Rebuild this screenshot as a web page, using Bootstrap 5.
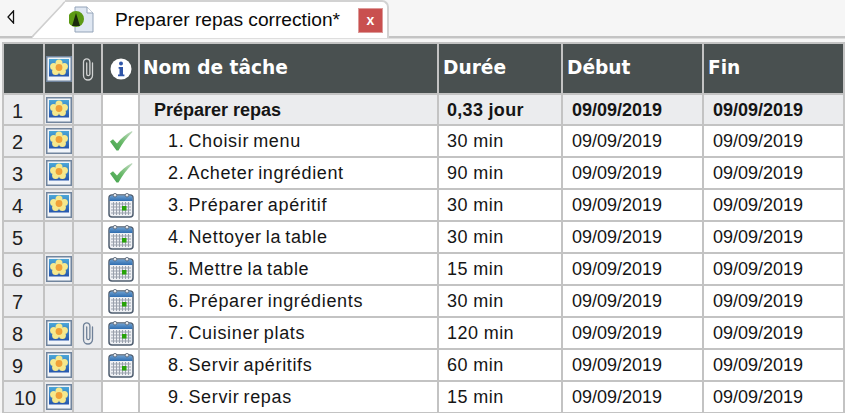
<!DOCTYPE html>
<html lang="fr">
<head>
    <meta charset="UTF-8">
    <title>Preparer repas correction</title>
    <link href="https://cdn.jsdelivr.net/npm/bootstrap@5.3.0/dist/css/bootstrap.min.css" rel="stylesheet">
    <style>
        body { background: #fff; font-family: "Liberation Sans", Arial, sans-serif; overflow: hidden; }
        .tab-strip { height: 38px; background: #f6f6f6; border-bottom: 2px solid #c4c4c4; }
        .tab-arrow { width: 32px; padding-left: 7px; padding-top: 10px; }
        .tab-slant { width: 33px; height: 38px; display: block; }
        .tab-body { width: 324px; height: 38px; background: #fff; border: 2px solid #d2d2d2; border-left: 0; border-bottom: 0; border-top-right-radius: 7px; padding-left: 4px; }
        .tab-title { font-size: 19.2px; color: #0a0a0a; margin-left: 20px; width: 243px; white-space: nowrap; }
        .tab-close { width: 25px; height: 25px; background: #c9504f; color: #fff; font-size: 14px; font-weight: 700; line-height: 22px; text-align: center; border: 1px solid #dd9a99; }
        .grid-wrap { padding: 3px 0 0 2px; background: #f6f6f6; height: 375px; border-top: 1px solid #dedede; }
        .task-grid { table-layout: fixed; width: 841px; border-collapse: collapse; margin: 0; }
        .task-grid th, .task-grid td { border: 2px solid #c3c3c3; padding: 0; vertical-align: middle; white-space: nowrap; overflow: hidden; line-height: 1.2; }
        .task-grid th { background: #495050; color: #fff; height: 51px; font-family: "DejaVu Sans", sans-serif; font-size: 18.6px; font-weight: 700; padding-left: 3px; }
        .task-grid td { height: 32px; padding-top: 2px; background: #fff; font-size: 18px; color: #151515; }
        .task-grid .grey-cell { background: #ebecee; }
        .task-grid .num-cell { font-size: 20px; font-weight: 400 !important; padding-left: 8px; color: #222; }
        .task-grid .num-cell.two { padding-left: 10px; }
        .task-grid .icon-cell { text-align: center; padding: 0; line-height: 0; }
        .task-grid .name-cell { padding-left: 28px; letter-spacing: .65px; word-spacing: -1.5px; }
        .task-grid .val-cell { padding-left: 8px; letter-spacing: .43px; }
        .task-grid .date-cell { padding-left: 9px; }
        .task-grid .sum-row td { font-weight: 700; height: 31px; }
        .task-grid .sum-row .name-cell { padding-left: 14px; letter-spacing: 0; word-spacing: 0; }
        .task-grid .sum-row .val-cell { letter-spacing: .3px; }
        .ic { display: inline-block; vertical-align: middle; }
    </style>
</head>
<body>
    <svg width="0" height="0" class="d-block position-absolute">
        <defs>
            <linearGradient id="skyG" x1="0" y1="0" x2="0" y2="1"><stop offset="0" stop-color="#4aa6d8"/><stop offset="1" stop-color="#2656ad"/></linearGradient>
            <linearGradient id="calTop" x1="0" y1="0" x2="0" y2="1"><stop offset="0" stop-color="#6c9fd0"/><stop offset="1" stop-color="#2f6db0"/></linearGradient>
            <linearGradient id="chkG" x1="1" y1="0" x2="0" y2="1"><stop offset="0" stop-color="#c6dcc6"/><stop offset=".55" stop-color="#66b866"/><stop offset="1" stop-color="#3f9f4a"/></linearGradient>
            <symbol id="i-photo" viewBox="0 0 26 26">
                <rect x=".75" y=".75" width="24.5" height="24.5" fill="#f1f5fa" stroke="#71859e" stroke-width="1.5"/>
                <rect x="3" y="3" width="20" height="17.5" fill="url(#skyG)"/>
                <g fill="#f6e88c">
                    <circle cx="13" cy="7" r="3.5"/><circle cx="7.6" cy="10.4" r="3.5"/><circle cx="18.4" cy="10.4" r="3.5"/><circle cx="9.6" cy="15.4" r="3.5"/><circle cx="16.4" cy="15.4" r="3.5"/>
                </g>
                <circle cx="13" cy="11.5" r="3.4" fill="#f0a038"/>
            </symbol>
            <symbol id="i-clip" viewBox="0 0 16 24">
                <path d="M12.5 6v12.5a4.5 4.5 0 0 1-9 0V5a3.2 3.2 0 0 1 6.4 0v12a1.6 1.6 0 0 1-3.2 0V6" fill="none" stroke="currentColor" stroke-width="1.3" stroke-linecap="round"/>
            </symbol>
            <symbol id="i-check" viewBox="0 0 24 22">
                <path d="M1 11.5 4 9.2 8 13.4C12 8.5 17 4 23 1 L23.5 2C17.5 8 13 14 9.5 20.5H7.5Z" fill="url(#chkG)"/>
            </symbol>
            <symbol id="i-cal" viewBox="0 0 26 26">
                <rect x="1" y="3" width="24" height="22" rx="3" fill="#eef0f4" stroke="#4f5d6f" stroke-width="1.5"/>
                <path d="M1.5 6a2.5 2.5 0 0 1 2.5-2.5h18a2.5 2.5 0 0 1 2.5 2.5v3h-23Z" fill="url(#calTop)"/>
                <path d="M3 12h20M3 15h20M3 18h20M3 21h20M5.5 10v13M8.5 10v13M11.5 10v13M14.5 10v13M17.5 10v13M20.5 10v13" fill="none" stroke="#9aa1ad" stroke-width="1"/>
                <rect x="14" y="14" width="4.5" height="4.5" fill="#27a308"/>
                <circle cx="7" cy="3.2" r="1.8" fill="#e6e9ee" stroke="#4f5d6f" stroke-width=".8"/>
                <circle cx="19" cy="3.2" r="1.8" fill="#e6e9ee" stroke="#4f5d6f" stroke-width=".8"/>
            </symbol>
            <symbol id="i-info" viewBox="0 0 22 22">
                <circle cx="11" cy="11" r="10.5" fill="#fff"/>
                <circle cx="11" cy="5.6" r="2" fill="#2f55a8"/>
                <path d="M8.6 9h4.4v7.4h1.4v1.8H8v-1.8h1.5v-5.6H8.6Z" fill="#2f55a8"/>
            </symbol>
        </defs>
    </svg>

    <div class="tab-strip d-flex align-items-start">
        <div class="tab-arrow">
            <svg width="8" height="14" viewBox="0 0 8 14" class="d-block"><path d="M6.5 1 1 7l5.5 6Z" fill="#fff" stroke="#111" stroke-width="1.3"/></svg>
        </div>
        <svg class="tab-slant" viewBox="0 0 33 38"><path d="M0 38 30 5Q32 2 33 2V38Z" fill="#fff"/><path d="M0 37 30 5Q32 2 33 2" fill="none" stroke="#cfcfcf" stroke-width="1.6"/></svg>
        <div class="tab-body d-flex align-items-center">
            <svg width="26" height="28" viewBox="0 0 26 28" class="ic flex-shrink-0">
                <path d="M6 1h12l6 6v19H6Z" fill="#dfe7f2" stroke="#93a3b8"/>
                <path d="M18 1v6h6" fill="#fff" stroke="#93a3b8"/>
                <circle cx="7" cy="13" r="8" fill="#5c9a14"/>
                <path d="M3 20 7 7l4 13Z" fill="#1b2a0c"/>
            </svg>
            <span class="tab-title">Preparer repas correction*</span>
            <div class="tab-close">x</div>
        </div>
    </div>

    <div class="grid-wrap">
        <table class="task-grid">
            <colgroup>
                <col style="width:41px"><col style="width:29px"><col style="width:29px"><col style="width:37px">
                <col style="width:299px"><col style="width:124px"><col style="width:141px"><col style="width:141px">
            </colgroup>
            <thead>
                <tr>
                    <th></th>
                    <th class="icon-cell"><svg class="ic" width="26" height="26"><use href="#i-photo"/></svg></th>
                    <th class="icon-cell"><svg class="ic text-white" width="16" height="24" style="opacity:.75"><use href="#i-clip"/></svg></th>
                    <th class="icon-cell"><svg class="ic" width="22" height="22"><use href="#i-info"/></svg></th>
                    <th>Nom de tâche</th>
                    <th class="ps-1">Durée</th>
                    <th class="ps-1">Début</th>
                    <th class="ps-1">Fin</th>
                </tr>
            </thead>
            <tbody id="rows"></tbody>
        </table>
    </div>

    <script src="https://cdn.jsdelivr.net/npm/bootstrap@5.3.0/dist/js/bootstrap.bundle.min.js"></script>
    <script>
        const tasks = [
            ['Préparer repas', '0,33 jour', 1, 0, ''],
            ['1. Choisir menu', '30 min', 1, 0, 'check'],
            ['2. Acheter ingrédient', '90 min', 1, 0, 'check'],
            ['3. Préparer apéritif', '30 min', 1, 0, 'cal'],
            ['4. Nettoyer la table', '30 min', 0, 0, 'cal'],
            ['5. Mettre la table', '15 min', 1, 0, 'cal'],
            ['6. Préparer ingrédients', '30 min', 0, 0, 'cal'],
            ['7. Cuisiner plats', '120 min', 1, 1, 'cal'],
            ['8. Servir apéritifs', '60 min', 1, 0, 'cal'],
            ['9. Servir repas', '15 min', 1, 0, '']
        ];
        const stateIcon = { check: '<svg class="ic" width="24" height="22"><use href="#i-check"/></svg>', cal: '<svg class="ic" width="26" height="26"><use href="#i-cal"/></svg>', '': '' };
        document.getElementById('rows').innerHTML = tasks.map((t, i) => {
            const grey = i === 0 ? ' grey-cell' : '';
            return `<tr class="${i === 0 ? 'sum-row' : ''}">
                <td class="grey-cell num-cell${i === 9 ? ' two' : ''}">${i + 1}</td>
                <td class="grey-cell icon-cell">${t[2] ? '<svg class="ic" width="26" height="26"><use href="#i-photo"/></svg>' : ''}</td>
                <td class="grey-cell icon-cell" style="color:#6f8198">${t[3] ? '<svg class="ic" width="16" height="24"><use href="#i-clip"/></svg>' : ''}</td>
                <td class="icon-cell">${stateIcon[t[4]]}</td>
                <td class="name-cell${grey}">${t[0]}</td>
                <td class="val-cell${grey}">${t[1]}</td>
                <td class="date-cell${grey}">09/09/2019</td>
                <td class="date-cell${grey}">09/09/2019</td>
            </tr>`;
        }).join('');
    </script>
</body>
</html>
